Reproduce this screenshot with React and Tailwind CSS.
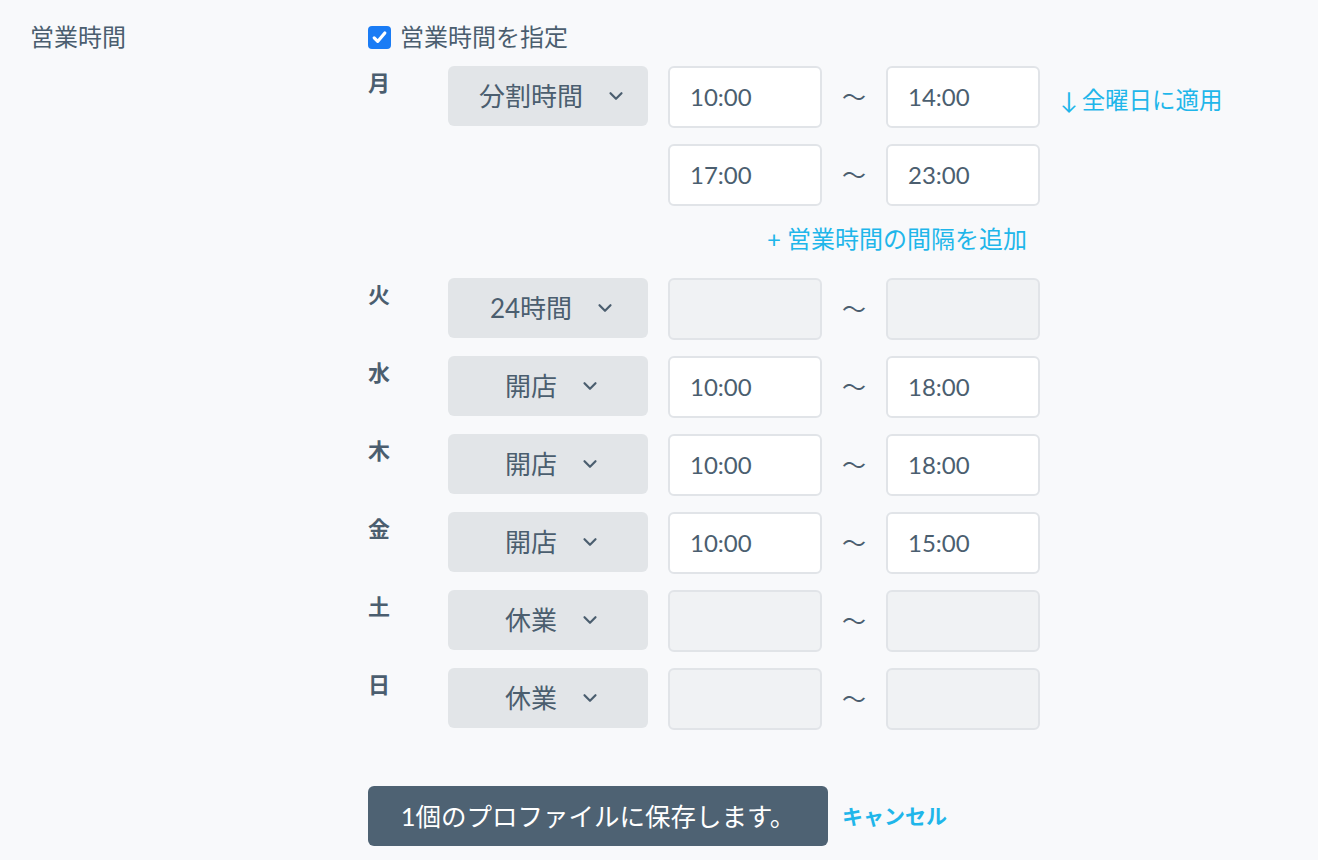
import React from 'react';
import { ChevronDown } from 'lucide-react';

const days = [
  { day: '月', mode: '分割時間', ranges: [['10:00', '14:00'], ['17:00', '23:00']], apply: true, addLink: true },
  { day: '火', mode: '24時間', ranges: [null] },
  { day: '水', mode: '開店', ranges: [['10:00', '18:00']] },
  { day: '木', mode: '開店', ranges: [['10:00', '18:00']] },
  { day: '金', mode: '開店', ranges: [['10:00', '15:00']] },
  { day: '土', mode: '休業', ranges: [null] },
  { day: '日', mode: '休業', ranges: [null] },
];

function TimeBox({ value }) {
  if (!value) {
    return <div className="h-[62px] w-[154px] rounded-[6px] border-2 border-[#e1e4e8] bg-[#f0f2f4]" />;
  }
  return (
    <div className="flex h-[62px] w-[154px] items-center rounded-[6px] border-2 border-[#e1e4e8] bg-white pl-[20px] text-[24px] text-[#4b5e6f]">
      {value}
    </div>
  );
}

function RangeRow({ range }) {
  return (
    <div className="flex items-center">
      <TimeBox value={range && range[0]} />
      <div className="flex w-[64px] justify-center text-[24px] text-[#4b5e6f]">〜</div>
      <TimeBox value={range && range[1]} />
    </div>
  );
}

function DayRow({ item }) {
  return (
    <div className="flex items-start">
      <div className="w-[80px] pt-[1px] text-[22px] font-bold leading-[32px] text-[#4b5e6f]">{item.day}</div>
      <div className="flex h-[60px] w-[200px] items-center justify-center gap-[22px] rounded-[6px] bg-[#e2e5e8] pl-[10px] text-[26px] text-[#4b5e6f]">
        <span>{item.mode}</span>
        <ChevronDown size={22} strokeWidth={2.4} />
      </div>
      <div className="ml-[20px] flex flex-col">
        <div className="flex flex-col gap-[16px]">
          {item.ranges.map((r, i) => (
            <RangeRow key={i} range={r} />
          ))}
        </div>
        {item.addLink && (
          <div className="mb-[6px] mt-[16px] flex h-[34px] items-center justify-end pr-[13px] text-[24px] text-[#1fb6ea]">
            + 営業時間の間隔を追加
          </div>
        )}
      </div>
      {item.apply && (
        <div className="ml-[20px] flex h-[62px] items-center pt-[8px] text-[23.5px] text-[#1fb6ea]">
          <span className="mr-[4px]">↓</span>全曜日に適用
        </div>
      )}
    </div>
  );
}

export default function App() {
  return (
    <div
      className="min-h-screen bg-[#f8f9fb] text-[#4b5e6f]"
      style={{ fontFamily: 'Lato, "Noto Sans CJK JP", sans-serif' }}
    >
      <div className="flex pl-[30px] pt-[19px]">
        <div className="w-[338px] text-[24px] leading-[36px]">営業時間</div>
        <div className="flex flex-col">
          <div className="flex h-[36px] items-center">
            <div className="flex h-[23px] w-[23px] items-center justify-center rounded-[4px] bg-[#1a7cf5]">
              <svg width="17" height="17" viewBox="0 0 16 16" fill="none">
                <path d="M3 8.3l3.3 3.4L13 3.8" stroke="white" strokeWidth="3" strokeLinecap="round" strokeLinejoin="round" />
              </svg>
            </div>
            <span className="ml-[9px] text-[24px]">営業時間を指定</span>
          </div>
          <div className="mt-[11px] flex flex-col gap-[16px]">
            {days.map((d) => (
              <DayRow key={d.day} item={d} />
            ))}
          </div>
          <div className="mt-[56px] flex items-center">
            <button className="flex h-[60px] w-[460px] items-center justify-center rounded-[6px] bg-[#4e6273] text-[25.5px] text-white">
              1個のプロファイルに保存します。
            </button>
            <span className="ml-[14px] text-[21px] font-bold text-[#1fb6ea]">キャンセル</span>
          </div>
        </div>
      </div>
    </div>
  );
}
